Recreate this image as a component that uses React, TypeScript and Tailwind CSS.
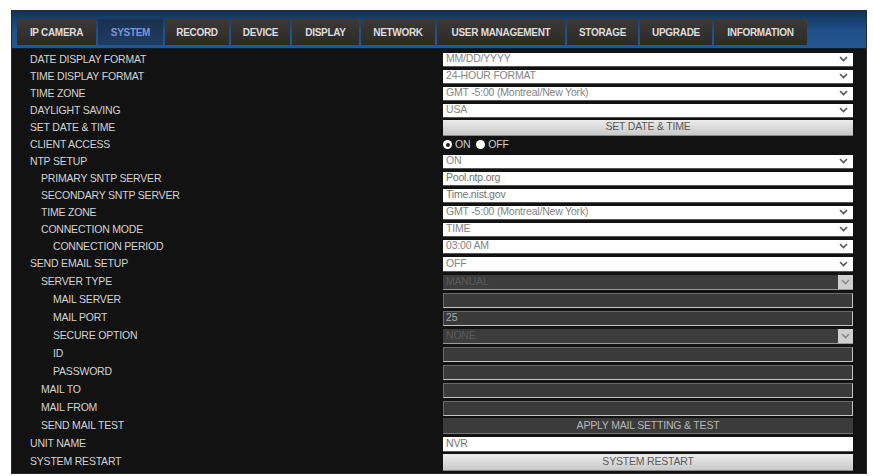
import React from "react";

type Kind =
  | { t: "select"; v: string }
  | { t: "input"; v: string }
  | { t: "btn"; v: string }
  | { t: "radio" }
  | { t: "dselect"; v: string }
  | { t: "dinput"; v: string }
  | { t: "dbtn"; v: string };

type Row = { label: string; indent: 0 | 1 | 2; tall?: boolean; c: Kind };

const rows: Row[] = [
  { label: "DATE DISPLAY FORMAT", indent: 0, c: { t: "select", v: "MM/DD/YYYY" } },
  { label: "TIME DISPLAY FORMAT", indent: 0, c: { t: "select", v: "24-HOUR FORMAT" } },
  { label: "TIME ZONE", indent: 0, c: { t: "select", v: "GMT -5:00 (Montreal/New York)" } },
  { label: "DAYLIGHT SAVING", indent: 0, c: { t: "select", v: "USA" } },
  { label: "SET DATE & TIME", indent: 0, c: { t: "btn", v: "SET DATE & TIME" } },
  { label: "CLIENT ACCESS", indent: 0, c: { t: "radio" } },
  { label: "NTP SETUP", indent: 0, c: { t: "select", v: "ON" } },
  { label: "PRIMARY SNTP SERVER", indent: 1, c: { t: "input", v: "Pool.ntp.org" } },
  { label: "SECONDARY SNTP SERVER", indent: 1, c: { t: "input", v: "Time.nist.gov" } },
  { label: "TIME ZONE", indent: 1, c: { t: "select", v: "GMT -5:00 (Montreal/New York)" } },
  { label: "CONNECTION MODE", indent: 1, c: { t: "select", v: "TIME" } },
  { label: "CONNECTION PERIOD", indent: 2, c: { t: "select", v: "03:00 AM" } },
  { label: "SEND EMAIL SETUP", indent: 0, tall: true, c: { t: "select", v: "OFF" } },
  { label: "SERVER TYPE", indent: 1, tall: true, c: { t: "dselect", v: "MANUAL" } },
  { label: "MAIL SERVER", indent: 2, tall: true, c: { t: "dinput", v: "" } },
  { label: "MAIL PORT", indent: 2, tall: true, c: { t: "dinput", v: "25" } },
  { label: "SECURE OPTION", indent: 2, tall: true, c: { t: "dselect", v: "NONE" } },
  { label: "ID", indent: 2, tall: true, c: { t: "dinput", v: "" } },
  { label: "PASSWORD", indent: 2, tall: true, c: { t: "dinput", v: "" } },
  { label: "MAIL TO", indent: 1, tall: true, c: { t: "dinput", v: "" } },
  { label: "MAIL FROM", indent: 1, tall: true, c: { t: "dinput", v: "" } },
  { label: "SEND MAIL TEST", indent: 1, tall: true, c: { t: "dbtn", v: "APPLY MAIL SETTING & TEST" } },
  { label: "UNIT NAME", indent: 0, tall: true, c: { t: "input", v: "NVR" } },
  { label: "SYSTEM RESTART", indent: 0, tall: true, c: { t: "btn", v: "SYSTEM RESTART" } },
];

const tabs: { name: string; w: string; active?: boolean }[] = [
  { name: "IP CAMERA", w: "w-[79px]" },
  { name: "SYSTEM", w: "w-[65px]", active: true },
  { name: "RECORD", w: "w-[64px]" },
  { name: "DEVICE", w: "w-[59px]" },
  { name: "DISPLAY", w: "w-[67px]" },
  { name: "NETWORK", w: "w-[74px]" },
  { name: "USER MANAGEMENT", w: "w-[128px]" },
  { name: "STORAGE", w: "w-[71px]" },
  { name: "UPGRADE", w: "w-[72px]" },
  { name: "INFORMATION", w: "w-[93px]" },
];

function Chevron({ color }: { color: string }) {
  return (
    <svg width="9" height="6" viewBox="0 0 9 6" className="shrink-0">
      <polyline points="1,1 4.5,4.5 8,1" fill="none" stroke={color} strokeWidth="1.6" />
    </svg>
  );
}

function Control({ c, tall }: { c: Kind; tall?: boolean }) {
  const h = tall ? "h-[15px]" : "h-[14px]";
  switch (c.t) {
    case "select":
      return (
        <div className={`${h} w-full bg-white border-b border-[#555] flex items-center pl-[3px] pr-[5px]`}>
          <span className="flex-1 text-[#858585] truncate">{c.v}</span>
          <Chevron color="#555" />
        </div>
      );
    case "input":
      return (
        <div className={`${h} w-full bg-white border-b border-[#555] flex items-center pl-[3px]`}>
          <span className="text-[#737373]">{c.v}</span>
        </div>
      );
    case "btn":
      return (
        <div
          className={`${tall ? "h-[17px]" : "h-[16px]"} w-full bg-gradient-to-b from-[#ececec] to-[#c9c9c9] border-b border-[#888] flex items-center justify-center text-[#5a5a5a]`}
        >
          {c.v}
        </div>
      );
    case "radio":
      return (
        <div className="h-[14px] w-full flex items-center gap-[3px] text-[#d0d0d0]">
          <span className="w-[9px] h-[9px] rounded-full bg-white flex items-center justify-center">
            <span className="w-[4px] h-[4px] rounded-full bg-[#222]" />
          </span>
          <span>ON</span>
          <span className="w-[9px] h-[9px] rounded-full bg-white ml-[3px]" />
          <span>OFF</span>
        </div>
      );
    case "dselect":
      return (
        <div className={`${h} w-full bg-[#3d3d3d] border-b border-[#9a9a9a] flex items-stretch`}>
          <span className="flex-1 pl-[3px] text-[#5a5a5a] flex items-center">{c.v}</span>
          <span className="w-[15px] bg-[#cfcfcf] flex items-center justify-center">
            <Chevron color="#8a8a8a" />
          </span>
        </div>
      );
    case "dinput":
      return (
        <div
          className={`${h} w-full bg-[#3a3a3a] border border-[#6a6a6a] border-b-[#c4c4c4] border-r-[#c4c4c4] flex items-center pl-[2px]`}
        >
          <span className="text-[#a8a8a8]">{c.v}</span>
        </div>
      );
    case "dbtn":
      return (
        <div className="h-[16px] w-full bg-[#3b3b3b] border-b border-[#777] flex items-center justify-center text-[#b8b8b8]">
          {c.v}
        </div>
      );
  }
}

export default function App() {
  const indentCls = ["pl-[18px]", "pl-[29px]", "pl-[41px]"];
  return (
    <div
      className="w-[873px] h-[476px] bg-white pl-[11px] pt-[10px] overflow-hidden"
      style={{ fontFamily: '"Liberation Sans", Arial, sans-serif' }}
    >
      <div className="w-[856px] h-[464px] bg-[#121212] border border-[#2a2a2a] flex flex-col">
        {/* tab bar */}
        <div className="h-[38px] bg-gradient-to-b from-[#12325a] via-[#1f4f86] to-[#245791] flex items-end pl-[5px] gap-[2px] pb-[3px] border-b border-[#0d1f33]">
          {tabs.map((t) => (
            <div
              key={t.name}
              className={`${t.w} h-[26px] flex items-center justify-center text-[10px] font-bold tracking-[-0.3px] ${
                t.active
                  ? "bg-gradient-to-b from-[#1a3150] to-[#203c62] text-[#7d95d8]"
                  : "bg-gradient-to-b from-[#3d3a36] to-[#2c2a27] text-[#dedede]"
              }`}
            >
              {t.name}
            </div>
          ))}
        </div>
        {/* rows */}
        <div className="flex flex-col pt-[2px] text-[10.5px] tracking-[-0.2px]">
          {rows.map((r, i) => (
            <div key={i} className={`flex items-center ${r.tall ? "h-[18px]" : "h-[17px]"}`}>
              <div className={`w-[431px] shrink-0 ${indentCls[r.indent]} text-[#d4d4d4] whitespace-nowrap`}>
                {r.label}
              </div>
              <div className="w-[410px] shrink-0 flex items-center">
                <Control c={r.c} tall={r.tall} />
              </div>
            </div>
          ))}
        </div>
      </div>
    </div>
  );
}
